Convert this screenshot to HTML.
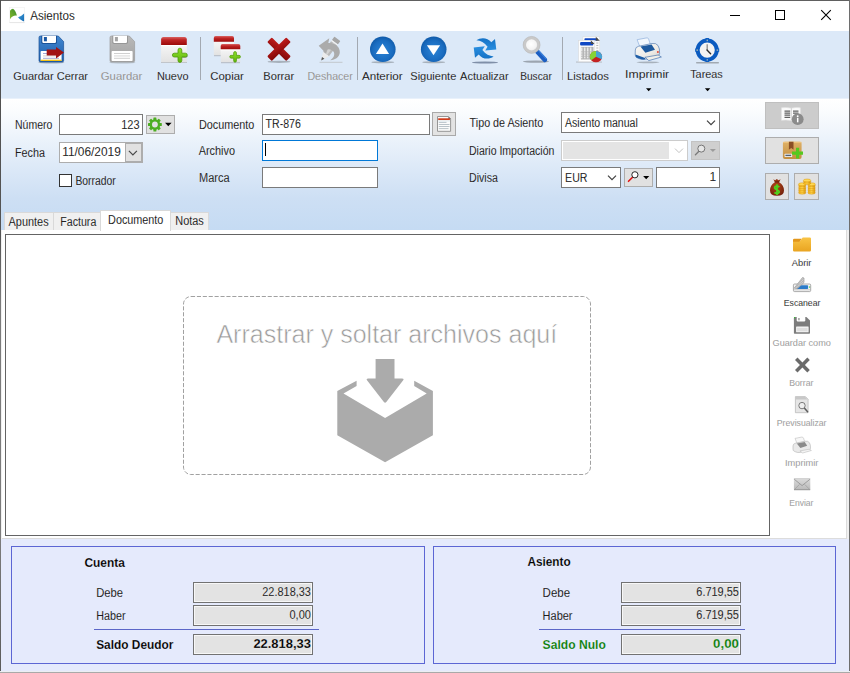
<!DOCTYPE html>
<html lang="es">
<head>
<meta charset="utf-8">
<title>Asientos</title>
<style>
*{box-sizing:border-box;margin:0;padding:0}
html,body{width:850px;height:673px;overflow:hidden;background:#fff}
body{position:relative;font-family:"Liberation Sans",sans-serif;font-size:11px;color:#000}
.abs{position:absolute}
#win{position:absolute;left:0;top:0;width:850px;height:673px;background:#fff;overflow:hidden}
/* window frame */
#bt{left:0;top:0;width:850px;height:1px;background:#606060}
#bl{left:0;top:0;width:1px;height:673px;background:linear-gradient(#4e4e4e 0,#555 35%,#7c7c7c 45%,#7c7c7c 80%,#5a5a5a 100%)}
#br{left:849px;top:0;width:1px;height:673px;background:#6e6e6e}
#bb{left:0;top:671px;width:850px;height:2px;background:#a9a9a9;border-top:1px solid #eceef2}
/* title */
#title{left:30px;top:8px;font-size:12px;line-height:15px;letter-spacing:-0.1px;white-space:nowrap}
/* toolbar */
#tb{left:1px;top:31px;width:848px;height:68px;background:#dce9f8;border-bottom:1px solid #e9f1fb}
.tl{position:absolute;top:69px;height:14px;line-height:14px;font-size:12px;white-space:nowrap;text-align:center}
.tl.dis{color:#8d8d8d}
.sep{position:absolute;top:37px;width:1px;height:43px;background:#a3a9b1}
/* form panel */
#fp{left:1px;top:99px;width:848px;height:131px;background:linear-gradient(#ffffff 0%,#fafcfe 10%,#deeaf8 50%,#cddff4 76%,#c5dbf3 100%)}
.lb{position:absolute;height:13px;line-height:13px;font-size:11px;white-space:nowrap}
.in{position:absolute;background:#fff;border:1px solid #7a7a7a;height:21px;font-size:11px;line-height:17px;padding:1px 3px;white-space:nowrap;overflow:hidden}
.btn{position:absolute;background:#e1e1e1;border:1px solid #adadad}
/* tabs */
.tab{position:absolute;top:212px;height:18px;background:#f0f0f0;border:1px solid #d9d9d9;border-bottom:none;font-size:11px;line-height:17px;text-align:center;white-space:nowrap}
.tab.act{top:210px;height:21px;background:#fff;line-height:17px;border-color:#d9d9d9}
#tp{left:1px;top:230px;width:848px;height:309px;background:#f0f0f0}
#tpw{left:2px;top:230px;width:845px;height:309px;background:#fff;border-right:1px solid #dcdcdc;border-bottom:1px solid #dcdcdc}
#doc{left:5px;top:234px;width:765px;height:302px;background:#fff;border:1px solid #646464}
#drop{left:183px;top:296px;width:408px;height:179px;border:1px dashed #9a9a9a;border-radius:9px}
#dropt{left:183px;top:318px;width:408px;text-align:center;font-size:24px;line-height:32px;color:#a3a3a3;white-space:nowrap}
.sl{position:absolute;left:770px;width:63px;text-align:center;font-size:9.5px;line-height:12px;white-space:nowrap;color:#000}
.sl.dis{color:#8e8e8e}
/* bottom */
#bp{left:1px;top:539px;width:848px;height:132px;background:#e5eafc}
.grp{position:absolute;border:1px solid #5c66d4;background:#e5eafc}
.ro{position:absolute;height:21px;background:#e3e3e3;border:1px solid #727272;box-shadow:inset 0 0 0 1px #f7f7f7;font-size:11px;line-height:17px;text-align:right;padding:1px 2px 0 0;white-space:nowrap}
.hl{position:absolute;height:1px;background:#5b66c8}
.b{font-weight:bold}
</style>
</head>
<body>
<div id="win">

<!-- title bar -->
<svg class="abs" style="left:0;top:0" width="850" height="31" viewBox="0 0 850 31">
  <!-- app icon -->
  <defs><linearGradient id="gLg" x1="0" y1="1" x2="1" y2="0"><stop offset="0" stop-color="#86bb2c"/><stop offset="1" stop-color="#3a8c2c"/></linearGradient>
  <linearGradient id="gLb" x1="0" y1="0" x2="1" y2="1"><stop offset="0" stop-color="#3a9ad8"/><stop offset="1" stop-color="#1a6db4"/></linearGradient></defs>
  <rect x="9.500" y="7.500" width="15" height="15" fill="#fff" stroke="#f1f1f1" stroke-width=".6"/>
  <path d="M9.600,22.600H24.600" stroke="#dedede" stroke-width=".7"/>
  <path d="M10,19.200 L10,10.800 Q11.400,8.800 13,8.800 Q15.600,10.600 16.900,15.600 Q12.600,14.900 10,19.200Z" fill="url(#gLg)"/>
  <path d="M24.100,13.500 L24.100,21 Q23.600,21.400 22.800,21 Q19.400,19.500 18,17.300 Q21.500,16.200 24.100,13.500Z" fill="url(#gLb)"/>
  <!-- controls -->
  <path d="M730,15.500H740" stroke="#000" stroke-width="1" fill="none"/>
  <rect x="775.5" y="10.5" width="9" height="9" fill="none" stroke="#000" stroke-width="1"/>
  <path d="M821.200,10.200L830.800,19.800M830.800,10.200L821.200,19.800" stroke="#000" stroke-width="1.1" fill="none"/>
</svg>

<!-- toolbar -->
<div class="abs" id="tb"></div>
<div class="sep" style="left:200px"></div>
<div class="sep" style="left:357px"></div>
<div class="sep" style="left:562px"></div>
<!--TOOLBAR-ICONS-->
<svg class="abs" id="tbi" style="left:0;top:31px" width="850" height="67" viewBox="0 31 850 67">
<defs>
  <linearGradient id="gBlue" x1="0" y1="0" x2="0" y2="1"><stop offset="0" stop-color="#4187d1"/><stop offset="1" stop-color="#1d5ca9"/></linearGradient>
  <linearGradient id="gGray" x1="0" y1="0" x2="0" y2="1"><stop offset="0" stop-color="#b9b9b9"/><stop offset="1" stop-color="#a2a2a2"/></linearGradient>
  <linearGradient id="gRed" x1="0" y1="0" x2="0" y2="1"><stop offset="0" stop-color="#d86262"/><stop offset=".35" stop-color="#c02626"/><stop offset="1" stop-color="#9c0a0a"/></linearGradient>
  <linearGradient id="gCal" x1="0" y1="0" x2="0" y2="1"><stop offset="0" stop-color="#f6f6f6"/><stop offset="1" stop-color="#e2e2e2"/></linearGradient>
  <linearGradient id="gX" x1="0" y1="38" x2="0" y2="60" gradientUnits="userSpaceOnUse"><stop offset="0" stop-color="#bb1c1c"/><stop offset="1" stop-color="#8a0b0b"/></linearGradient>
  <linearGradient id="gPlus" x1="0" y1="0" x2="0" y2="1"><stop offset="0" stop-color="#8fe02a"/><stop offset="1" stop-color="#5fb40c"/></linearGradient>
  <radialGradient id="gBall" cx=".5" cy=".55" r=".55"><stop offset="0" stop-color="#2b84d6"/><stop offset=".7" stop-color="#1a6cc0"/><stop offset="1" stop-color="#0f5aa8"/></radialGradient>
  <linearGradient id="gArr" x1="0" y1="0" x2="0" y2="1"><stop offset="0" stop-color="#1572c6"/><stop offset="1" stop-color="#2a8fe0"/></linearGradient>
  <radialGradient id="gLens" cx=".45" cy=".45" r=".6"><stop offset="0" stop-color="#ffffff"/><stop offset=".6" stop-color="#f4f4f4"/><stop offset="1" stop-color="#dcdcdc"/></radialGradient>
  <linearGradient id="gXa" x1="0" y1="0" x2="1" y2="0" gradientTransform="rotate(45 .5 .5)"><stop offset="0" stop-color="#b81a1a"/><stop offset="1" stop-color="#870a0a"/></linearGradient>
  <linearGradient id="gXb" x1="1" y1="0" x2="0" y2="0" gradientTransform="rotate(-45 .5 .5)"><stop offset="0" stop-color="#b81a1a"/><stop offset="1" stop-color="#870a0a"/></linearGradient>
  <linearGradient id="gPrn" x1="0" y1="0" x2="1" y2="1"><stop offset="0" stop-color="#fbfaf8"/><stop offset=".6" stop-color="#eeece7"/><stop offset="1" stop-color="#d3d0c9"/></linearGradient>
</defs>

<!-- Guardar Cerrar -->
<g id="i-save">
  <ellipse cx="51.300" cy="62.500" rx="13" ry="1" fill="#98a0aa" opacity=".75"/>
  <path d="M40.500,36 H58.300 L63.600,41.600 V60.600 Q63.600,62 62.200,62 H40.400 Q39,62 39,60.600 V37.400 Q39,36 40.500,36Z" fill="url(#gBlue)" stroke="#1b5296" stroke-width=".7"/>
  <path d="M41.300,35.700 V42.200 Q41.300,43.900 43,43.900 H55.300 Q57,43.900 57,42.200 V35.700Z" fill="#1b5297"/><path d="M42.300,35.700 V41.700 Q42.300,42.900 43.500,42.900 H54.800 Q56,42.900 56,41.700 V35.700Z" fill="#fff"/>
  <rect x="43.900" y="37" width="3" height="4.300" fill="#1a58a4"/>
  <rect x="40.600" y="50.900" width="21" height="10.100" rx=".8" fill="#fff"/>
  <rect x="40.600" y="59.700" width="21" height="1.300" fill="#f2c21a"/>
  <path d="M43,53.500H59M43,58.300H59" stroke="#8d93c9" stroke-width=".8"/><path d="M43,55.900H59" stroke="#cfcfcf" stroke-width="1"/>
  <path d="M46.700,49.400 H56 V46.900 L64,52.600 L56,58.500 V55.600 H46.700Z" fill="#a11313"/>
</g>
<!-- Guardar (disabled) -->
<g id="i-save2">
  <ellipse cx="122.300" cy="62.500" rx="13" ry="1" fill="#aab2bc" opacity=".7"/>
  <path d="M111.500,36 H129.300 L134.600,41.600 V60.600 Q134.600,62 133.200,62 H111.400 Q110,62 110,60.600 V37.400 Q110,36 111.500,36Z" fill="url(#gGray)" stroke="#9c9c9c" stroke-width=".7"/>
  <path d="M112.300,35.700 V42.200 Q112.300,43.900 114,43.900 H126.300 Q128,43.900 128,42.200 V35.700Z" fill="#979797"/><path d="M113.300,35.700 V41.700 Q113.300,42.900 114.500,42.900 H125.800 Q127,42.900 127,41.700 V35.700Z" fill="#fff"/>
  <rect x="114.900" y="37" width="3" height="4.300" fill="#a4a4a4"/>
  <rect x="111.600" y="50.900" width="21" height="10.100" rx=".8" fill="#fff"/>
  <path d="M114,53.500H130M114,58.300H130" stroke="#c4c4c4" stroke-width=".8"/><path d="M114,55.900H130" stroke="#e2e2e2" stroke-width="1.400"/>
</g>
<!-- Nuevo -->
<g id="i-new">
  <rect x="161" y="62" width="26" height="1" fill="#b3b9c1"/>
  <rect x="161.100" y="44.500" width="25.700" height="17.800" fill="url(#gCal)"/>
  <rect x="161.100" y="44.900" width="25.700" height="1.400" fill="#fff"/>
  <path d="M163.500,37 H184.500 Q186.800,37 186.800,39.600 V44.900 H161.100 V39.600 Q161.100,37 163.500,37Z" fill="url(#gRed)"/>
  <path d="M179.900,48.200 q1.900,0 1.900,1.900 v3.100 h3.600 q1.900,0 1.900,1.900 q0,1.900 -1.900,1.900 h-3.600 v3.500 q0,1.900 -1.900,1.900 q-1.900,0 -1.900,-1.900 v-3.500 h-3.700 q-1.900,0 -1.900,-1.900 q0,-1.900 1.900,-1.900 h3.700 v-3.100 q0,-1.900 1.900,-1.900Z" fill="url(#gPlus)" stroke="#4d9a08" stroke-width=".8"/><path d="M182.300,57.400h3.300q1.800,0 2,-1.600" fill="none" stroke="#3d5a2a" stroke-width=".6" opacity=".6"/>
</g>
<!-- Copiar -->
<g id="i-copy">
  <rect x="213.800" y="41.500" width="20.200" height="13.700" fill="url(#gCal)"/>
  <rect x="214" y="55.200" width="7" height="1" fill="#b3b9c1"/>
  <path d="M215.600,36.100 H232.200 Q234,36.100 234,38 V41.800 H213.800 V38 Q213.800,36.100 215.600,36.100Z" fill="url(#gRed)"/>
  <rect x="220.700" y="49" width="19.600" height="13.300" fill="url(#gCal)"/>
  <rect x="220.700" y="49.200" width="19.600" height="1.200" fill="#fff"/>
  <rect x="221" y="62.200" width="19" height="1" fill="#b3b9c1"/>
  <path d="M222.500,44.100 H238.500 Q240.300,44.100 240.300,46 V49.200 H220.700 V46 Q220.700,44.100 222.500,44.100Z" fill="url(#gRed)"/>
  <path d="M235.050,51.600 q1.400,0 1.400,1.400 v2.350 h2.600 q1.400,0 1.400,1.400 q0,1.400 -1.400,1.400 h-2.600 v2.700 q0,1.400 -1.400,1.400 q-1.400,0 -1.400,-1.400 v-2.700 h-2.500 q-1.400,0 -1.400,-1.400 q0,-1.400 1.400,-1.400 h2.500 v-2.350 q0,-1.400 1.400,-1.400Z" fill="url(#gPlus)" stroke="#4d9a08" stroke-width=".7"/>
</g>
<!-- Borrar -->
<g id="i-del">
  <ellipse cx="279" cy="61.800" rx="11.500" ry="1.100" fill="#9aa2ab" opacity=".8"/>
  <g transform="translate(279 49.200)" fill="url(#gX)">
    <rect x="-13.500" y="-3.300" width="27" height="6.600" rx="1.200" transform="rotate(45)" fill="url(#gXa)"/>
    <rect x="-13.500" y="-3.300" width="27" height="6.600" rx="1.200" transform="rotate(-45)" fill="url(#gXb)"/>
  </g>
</g>
<!-- Deshacer (disabled) -->
<g id="i-undo">
  <rect x="319.500" y="61.800" width="23" height="1" fill="#c3c7cc"/>
  <g transform="translate(329.300 49.700) rotate(36.700)">
    <rect x="-3.700" y="-13.600" width="7.400" height="4.300" rx=".6" fill="#a6a6a6"/>
    <rect x="-3.700" y="-9.300" width="7.400" height="1.400" fill="#f0f0f0"/>
    <rect x="-3.700" y="-7.900" width="7.400" height="13.400" fill="#b9b9b9"/>
    <rect x="-1.200" y="-7.900" width="2.600" height="13.400" fill="#d2d2d2"/>
    <path d="M-3.700,5.500 H3.700 L0,13.400Z" fill="#ebebeb"/>
    <path d="M-1.500,10.200 H1.500 L0,13.600Z" fill="#565656"/>
  </g>
  <path d="M318.700,45.700 L329.300,38.300 L328.300,43 C335.500,42.600 340.200,47.300 339.800,52.600 C339.500,56.800 335.500,60.200 330.200,60.200 C333.800,58 335.200,54.600 333.600,51.800 C332.300,49.600 329.600,48.800 327,49.400 L326.200,53.700Z" fill="#ababab"/>
</g>
<!-- Anterior -->
<g id="i-prev">
  <ellipse cx="382.800" cy="62.300" rx="11.500" ry="1" fill="#9aa2ab" opacity=".8"/>
  <circle cx="382.800" cy="49.200" r="12.800" fill="url(#gBall)"/>
  <path d="M382.500,43.600 L389.100,54 H375.900Z" fill="#fff"/>
</g>
<!-- Siguiente -->
<g id="i-next">
  <ellipse cx="433.700" cy="62.300" rx="11.500" ry="1" fill="#9aa2ab" opacity=".8"/>
  <circle cx="433.700" cy="49.200" r="12.800" fill="url(#gBall)"/>
  <path d="M426.900,45.200 H440.100 L433.500,55.300Z" fill="#fff"/>
</g>
<!-- Actualizar -->
<g id="i-refresh">
  <ellipse cx="485" cy="62.500" rx="13" ry="1" fill="#6e7f9a" opacity=".85"/>
  <path id="arr1" d="M476.400,40.300 C480.500,37.200 487.500,37.200 491.300,42.300 L495,39 L496.300,49.400 L485.200,50.500 L487.600,46.700 C484.500,42.600 480.500,40.600 476.400,40.300Z" fill="url(#gArr)"/>
  <path d="M476.400,40.300 C480.500,37.200 487.500,37.200 491.300,42.300 L495,39 L496.300,49.400 L485.200,50.500 L487.600,46.700 C484.500,42.600 480.500,40.600 476.400,40.300Z" fill="url(#gArr)" transform="rotate(180 485 48.400)"/>
</g>
<!-- Buscar -->
<g id="i-find">
  <ellipse cx="536" cy="61.600" rx="13" ry="1.100" fill="#8c949e" opacity=".8"/>
  <path d="M537.300,51.800 L544.900,59.900" stroke="#1b5ec2" stroke-width="4.600" stroke-linecap="round"/>
  <path d="M538.600,50.700 L546,58.600" stroke="#3d82dc" stroke-width="1.200" stroke-linecap="round"/>
  <circle cx="531.600" cy="44.900" r="7.100" fill="url(#gLens)" stroke="#c9c9c9" stroke-width="3"/>
  <circle cx="531.600" cy="44.900" r="8.500" fill="none" stroke="#b5b5b5" stroke-width=".5"/>
</g>
<!-- Listados -->
<g id="i-list">
  <rect x="576" y="61.500" width="26" height="1.100" fill="#b9bfc6"/>
  <rect x="582.900" y="36.800" width="16.900" height="24.500" fill="#fbfbfb" stroke="#dadada" stroke-width=".5"/>
  <rect x="584.400" y="38.300" width="13.400" height="2.100" rx="1" fill="#1048c4"/>
  <path d="M595.800,36.800 L599.800,40.800 H595.800Z" fill="#4a4a4a"/>
  <path d="M596.300,43H598.300M596.300,45.500H598.300M596.300,48H598.300M596.300,50.500H598.300" stroke="#bdbdbd" stroke-width="1"/>
  <rect x="578.600" y="40.300" width="15.900" height="21.400" fill="#fdfdfd" stroke="#d6d6d6" stroke-width=".5"/>
  <rect x="580.100" y="42.100" width="13.200" height="3.300" rx="1" fill="#1048c4"/>
  <path d="M590.800,40.300 L594.500,44 H590.800Z" fill="#4a4a4a"/>
  <rect x="580.900" y="46.900" width="12.600" height="12.600" fill="#b4b4b4"/>
  <path d="M581.700,47.500v11.500M584.700,47.500v11.500M587.700,47.500v11.500M590.700,47.500v11.500" stroke="#e9e9e9" stroke-width="1.500"/>
  <path d="M581,51.800h12.400M581,54.100h12.400M581,56.300h12.400M581,58.500h12.400" stroke="#b4b4b4" stroke-width=".7"/>
  <g>
    <ellipse cx="596" cy="56.700" rx="6.100" ry="5.600" fill="#c32222"/>
    <path d="M596,56.700 L596,51.100 A6.100,5.600 0 0 0 591.300,60.300Z" fill="#86d436"/>
    <path d="M596,56.700 L596,51.100 A6.100,5.600 0 0 1 601.500,59.200Z" fill="#45a3d4"/>
  </g>
</g>
<!-- Imprimir -->
<g id="i-print">
  <ellipse cx="648" cy="62.300" rx="11.500" ry=".9" fill="#9aa2ab" opacity=".8"/>
  <path d="M637.100,39.700 L646,38 Q648,37.300 648.600,39 L650.300,44.300 L639.800,46.600Z" fill="#f2f7fd" stroke="#8fb0dc" stroke-width=".7"/>
  <path d="M635.300,50 Q635.300,47 638.500,46.300 L652,43.500 Q656,42.800 658,45.500 Q660,48.500 659.600,53.500 Q659.400,55.800 657,56.500 L645,59.300 Q642,59.800 639,58.600 L636.400,57.400 Q635.200,56.600 635.200,54.500Z" fill="url(#gPrn)" stroke="#3a6aa8" stroke-width=".6"/>
  <path d="M640.400,46.500 L651.600,44.400 L655,49.800 L645.400,52.700Z" fill="#1e5a9f"/>
  <path d="M635.500,54.500 L645,58 L645,59.300 Q642,59.800 639,58.600 L636.400,57.400 Q635.400,56.600 635.500,54.500Z" fill="#1e5ea8"/>
  <path d="M644.900,57.300 L658.200,55 L661.400,57 L648.800,60.600Z" fill="#f0eee8" stroke="#2d62a6" stroke-width=".6"/>
  <circle cx="657.900" cy="51.900" r="1" fill="#e24a3a"/>
</g>
<!-- Tareas -->
<g id="i-task">
  <rect x="696" y="62" width="23" height="1.400" rx=".7" fill="#a1a9b1"/>
  <circle cx="707.200" cy="50.100" r="9.600" fill="#f3f3f3" stroke="#0b5bc0" stroke-width="4"/>
  <path d="M707.200,38.100v2.600M707.200,59.500v2.600M695.200,50.100h2.600M716.600,50.100h2.600" stroke="#0b5bc0" stroke-width="3.400"/>
  <path d="M707.200,39.600v1.600M707.200,59.200v1.400M696.400,50.100h1.600M716.600,50.100h1.600" stroke="#f1e7b4" stroke-width=".9"/>
  <path d="M707.200,44.200V50.300" stroke="#8b8b8b" stroke-width="1.300"/>
  <path d="M707,50.100L710.600,53.700" stroke="#2d2d2d" stroke-width="1.400" stroke-linecap="round"/>
</g>
<!-- dropdown arrows -->
<path d="M646,88.200h5.400l-2.700,3Z" fill="#000"/>
<path d="M704.900,88.200h5.400l-2.700,3Z" fill="#000"/>
</svg>
<!--/TOOLBAR-ICONS-->

<!-- form panel -->
<div class="abs" id="fp"></div>
<div class="in" style="left:59px;top:114px;width:84px;text-align:right"></div>
<div class="btn" style="left:146px;top:115px;width:29px;height:19px"></div>
<div class="in" style="left:59px;top:142px;width:84px;border-color:#adadad"></div>
<div class="btn" style="left:125px;top:143px;width:17px;height:19px;background:#e1e1e1;border-color:#adadad"></div>
<div class="abs" style="left:59px;top:174px;width:13px;height:13px;background:#fff;border:1px solid #333"></div>

<div class="in" style="left:262px;top:114px;width:168px"></div>
<div class="btn" style="left:432px;top:112px;width:24px;height:24px;background:#e3e3e3;border-color:#a9a9a9"></div>
<div class="in" style="left:262px;top:140px;width:116px;border-color:#0078d7"></div>
<div class="abs" style="left:265px;top:143px;width:1px;height:13px;background:#000"></div>
<div class="in" style="left:262px;top:167px;width:116px"></div>

<div class="in" style="left:561px;top:112px;width:159px"></div>
<div class="in" style="left:561px;top:140px;width:127px;border-color:#cccccc;background:#fff"></div>
<div class="abs" style="left:563px;top:142px;width:106px;height:17px;background:#e4e4e4"></div>
<div class="btn" style="left:691px;top:141px;width:29px;height:19px;background:#cfcfcf;border-color:#c3c3c3"></div>
<div class="in" style="left:561px;top:167px;width:60px"></div>
<div class="btn" style="left:624px;top:168px;width:29px;height:19px"></div>
<div class="in" style="left:656px;top:167px;width:64px;text-align:right"></div>

<div class="btn" style="left:765px;top:102px;width:54px;height:27px;background:#cccccc;border-color:#bfbfbf"></div>
<div class="btn" style="left:765px;top:137px;width:54px;height:27px"></div>
<div class="btn" style="left:765px;top:173px;width:24px;height:27px"></div>
<div class="btn" style="left:794px;top:173px;width:25px;height:27px"></div>

<!-- tabs -->
<div class="abs" id="tp"></div><div class="abs" id="tpw"></div>
<div class="tab" style="left:4px;width:50px"></div>
<div class="tab" style="left:53px;width:48px"></div>
<div class="tab" style="left:170px;width:39px"></div>
<div class="tab act" style="left:100px;width:71px"></div>
<div class="abs" id="doc"></div>
<svg class="abs" style="left:180px;top:292px" width="416" height="188" viewBox="180 292 416 188">
  <rect x="183.500" y="296.500" width="407" height="178" rx="7.500" fill="none" stroke="#969696" stroke-width=".9" stroke-dasharray="4.100 1.800"/>
  <path d="M337.300,391 L356.600,380.700 L356.600,386 L343.500,393.500 L385.100,418 L426.700,393.500 L414.200,386 L414.200,380.700 L432.900,391 L432.900,435.200 L385.100,462.300 L337.300,435.200 Z" fill="#ababab"/>
  <path d="M375.600,358.900 H394.500 V378.500 H402 Q404.500,378.500 403,380.500 L386.300,402 Q385.100,403.500 383.900,402 L367.200,380.500 Q365.700,378.500 368.200,378.500 H375.600 Z" fill="#ababab"/>
</svg>


<!--FORM-ICONS-->
<svg class="abs" id="fmi" style="left:0;top:98px" width="850" height="440" viewBox="0 98 850 440">
<defs>
  <linearGradient id="gFold" x1="0" y1="0" x2="0" y2="1"><stop offset="0" stop-color="#f9c445"/><stop offset="1" stop-color="#e9a421"/></linearGradient>
  <linearGradient id="gBox" x1="0" y1="0" x2="0" y2="1"><stop offset="0" stop-color="#dfb167"/><stop offset="1" stop-color="#c48f40"/></linearGradient>
  <radialGradient id="gBag" cx=".45" cy=".4" r=".65"><stop offset="0" stop-color="#b4481a"/><stop offset="1" stop-color="#74200a"/></radialGradient>
  <linearGradient id="gCoin" x1="0" y1="0" x2="1" y2="0"><stop offset="0" stop-color="#f6b51a"/><stop offset=".5" stop-color="#ffd34a"/><stop offset="1" stop-color="#e09a08"/></linearGradient>
  <linearGradient id="gEnv" x1="0" y1="0" x2="0" y2="1"><stop offset="0" stop-color="#dcdcdc"/><stop offset="1" stop-color="#b9b9b9"/></linearGradient>
</defs>
<!-- gear button -->
<g id="f-gear">
  <g transform="translate(154.900 124.500)" fill="#4cae22">
    <g id="teeth"><rect x="-1.500" y="-6.900" width="3" height="13.800" rx=".5"/><rect x="-6.900" y="-1.500" width="13.800" height="3" rx=".5"/></g>
    <g transform="rotate(45)"><rect x="-1.500" y="-6.900" width="3" height="13.800" rx=".5"/><rect x="-6.900" y="-1.500" width="13.800" height="3" rx=".5"/></g>
    <circle r="5.300"/>
    <circle r="2.900" fill="#e1e1e1"/>
  </g>
  <path d="M165,122.700h6.600l-3.300,3.600Z" fill="#000"/>
</g>
<!-- date chevron -->
<path d="M128.900,150.800L132.900,154.800L136.900,150.800" fill="none" stroke="#484848" stroke-width="1.200"/>
<!-- notepad -->
<g id="f-note">
  <path d="M437.500,116.500H448.300L450.600,118.800V131.300H437.500Z" fill="#fbfbfb" stroke="#8b8b8b" stroke-width=".9"/>
  <path d="M448.300,116.200L451,118.900H448.300Z" fill="#777"/>
  <rect x="438.200" y="118.300" width="11.700" height="1.800" fill="#cf3b1b"/>
  <rect x="438.200" y="120.400" width="11.700" height="1.200" fill="#e4f1f6"/>
  <path d="M438.800,122.400H446.500M438.800,124.500H449.500M438.800,126.500H449.500M438.800,128.600H448.500" stroke="#a9b5bd" stroke-width=".8"/>
</g>
<!-- combo chevrons -->
<path d="M707,120.700L711,124.700L715,120.700" fill="none" stroke="#404040" stroke-width="1.200"/>
<path d="M675,148.600L679,152.600L683,148.600" fill="none" stroke="#c2c2c2" stroke-width="1"/>
<path d="M608,175.700L612,179.700L616,175.700" fill="none" stroke="#404040" stroke-width="1.200"/>
<!-- disabled search -->
<g id="f-s1">
  <path d="M698.900,151.300L695.400,154.800" stroke="#7a7a7a" stroke-width="1.300" stroke-linecap="round"/>
  <circle cx="701.300" cy="148.600" r="3.500" fill="#e6e6e6" stroke="#6a6a6a" stroke-width=".9"/>
  <path d="M709.900,149.100h6l-3,3Z" fill="#9c9c9c"/>
</g>
<!-- search -->
<g id="f-s2">
  <path d="M632.300,177.500L628.500,181.300" stroke="#e21212" stroke-width="1.600" stroke-linecap="round"/>
  <circle cx="634.900" cy="174.800" r="3.100" fill="#fff" stroke="#111" stroke-width=".9"/>
  <path d="M643.100,176.100h6.200l-3.100,3.100Z" fill="#000"/>
</g>
<!-- book info -->
<g id="f-book">
  <path d="M781.500,107.800Q786,107 791.400,108.200Q796,107 800.300,107.800V120.300Q796,119.500 791.400,120.600Q786,119.500 781.500,120.300Z" fill="#fbfbfb" stroke="#e3e3e3" stroke-width=".7"/>
  <path d="M791.400,108.200V120.600" stroke="#c4c4c4" stroke-width=".7"/>
  <path d="M784.500,111H790.200M784.500,113.100H790.200M784.500,115.200H790.200M784.500,117.400H790.200M793,111H798.500M793,113.100H798.500" stroke="#606060" stroke-width="1.250"/>
  <circle cx="797.700" cy="119.200" r="5.900" fill="#8b8b8b"/>
  <circle cx="797.700" cy="116.200" r=".95" fill="#fff"/><rect x="796.950" y="117.900" width="1.500" height="4.400" fill="#fff"/>
</g>
<!-- box plus -->
<g id="f-box">
  <rect x="782.900" y="141.700" width="18.700" height="17.200" rx="2" fill="url(#gBox)"/>
  <rect x="782.900" y="141.700" width="18.700" height="1.200" rx=".6" fill="#edc27c"/>
  <path d="M788.900,141.700H793.500V149.700L791.200,148L788.900,149.700Z" fill="#8a4e25"/>
  <rect x="784.600" y="153.800" width="7.600" height="3.200" rx=".5" fill="#f1f1f1"/>
  <rect x="785.400" y="154.700" width="5.800" height="1.400" fill="#55606c"/>
  <path d="M796,147.700h3.200v3.900h3.800v3.200h-3.800v3.700h-3.200v-3.700h-4v-3.200h4Z" fill="#56c81f"/>
</g>
<!-- money bag -->
<g id="f-bag">
  <path d="M773.300,179.300L775.200,180.300L776.800,178.900L778.500,180.300L780.600,179.300L779,182.200Q784,185 784,190.500Q784,195.800 777,195.800Q770,195.800 770,190.500Q770,185 775,182.200Z" fill="url(#gBag)"/>
  <path d="M774.600,181.900H779.300" stroke="#5e1a08" stroke-width=".9"/>
  <path d="M779.400,186.900Q777,185.400 775.300,186.500Q773.800,188 776,189.300L778.200,190.400Q780,191.800 778.500,193Q776.700,194 774.400,192.600M777,184.300V195" fill="none" stroke="#4fd21c" stroke-width="1.800"/>
</g>
<!-- coins -->
<g id="f-coins" stroke="#d08c00" stroke-width=".4">
  <g id="st1"><ellipse cx="802.200" cy="192.800" rx="3.700" ry="1.400" fill="url(#gCoin)"/><ellipse cx="802.200" cy="190.900" rx="3.700" ry="1.400" fill="url(#gCoin)"/><ellipse cx="802.200" cy="189" rx="3.700" ry="1.400" fill="url(#gCoin)"/><ellipse cx="802.200" cy="187.100" rx="3.700" ry="1.400" fill="url(#gCoin)"/><ellipse cx="802.200" cy="185.200" rx="3.700" ry="1.400" fill="url(#gCoin)"/><ellipse cx="802.200" cy="184.200" rx="3.700" ry="1.400" fill="#ffd954"/></g>
  <g><ellipse cx="811.600" cy="192.800" rx="3.700" ry="1.400" fill="url(#gCoin)"/><ellipse cx="811.600" cy="190.900" rx="3.700" ry="1.400" fill="url(#gCoin)"/><ellipse cx="811.600" cy="189" rx="3.700" ry="1.400" fill="url(#gCoin)"/><ellipse cx="811.600" cy="187.100" rx="3.700" ry="1.400" fill="url(#gCoin)"/><ellipse cx="811.600" cy="185.200" rx="3.700" ry="1.400" fill="url(#gCoin)"/><ellipse cx="811.600" cy="184.200" rx="3.700" ry="1.400" fill="#ffd954"/></g>
  <g><ellipse cx="807.100" cy="183.200" rx="3.700" ry="1.400" fill="url(#gCoin)"/><ellipse cx="807.100" cy="181.600" rx="3.700" ry="1.400" fill="url(#gCoin)"/><ellipse cx="807.100" cy="180.400" rx="3.700" ry="1.400" fill="#ffd954"/></g>
</g>

<!-- side panel icons -->
<g id="s-open">
  <path d="M793,240Q793,238.800 794.200,238.800H801.800L799.600,242H793Z" fill="#e2961b"/>
  <path d="M793,241.700H799.600L802.700,237.400H809.800Q811,237.400 811,238.600V250.300Q811,251.500 809.800,251.500H794.200Q793,251.500 793,250.300Z" fill="url(#gFold)"/>
</g>
<g id="s-scan">
  <rect x="793.400" y="284" width="17.300" height="7.600" rx="1.200" fill="#f3f3f3" stroke="#8a8a8a" stroke-width=".7"/>
  <path d="M793.600,289.800H810.500" stroke="#a8a8a8" stroke-width=".6"/>
  <path d="M798.600,285.300H807.400Q808.100,285.300 808.100,286V288.300Q808.100,289 807.400,289H796.600Z" fill="#2b7bc9"/>
  <path d="M794.200,288.200L802.500,277.500L804,278V282.400L797.600,288.600Z" fill="#d4d4d4" stroke="#8c8c8c" stroke-width=".6" stroke-linejoin="round"/>
  <path d="M795.700,287.800L803.200,278.300M797,288L803.700,280.200" stroke="#9c9c9c" stroke-width=".6"/>
  <rect x="809" y="286.500" width="1.100" height="1.100" fill="#2fd02f"/>
</g>
<g id="s-save">
  <path d="M794.700,317.100H806.400L810,320.600V333Q810,333.800 809.200,333.800H794.700Q793.900,333.800 793.900,333V317.900Q793.900,317.100 794.700,317.100Z" fill="#7c7c7c"/>
  <path d="M796.700,317.100H805.300V320.600Q805.300,321.400 804.500,321.400H797.500Q796.700,321.400 796.700,320.600Z" fill="#fff"/>
  <rect x="798.400" y="318" width="1.100" height="2.300" fill="#7c7c7c"/>
  <rect x="796.100" y="326.600" width="12.500" height="5.700" rx=".5" fill="#f5f5f5"/>
  <rect x="797.100" y="327.800" width="10.500" height="3.500" fill="#dedede"/>
  <rect x="794" y="317.200" width="1" height="1" fill="#22d022"/>
</g>
<g id="s-del" transform="translate(802.400 365)" fill="#6b6b6b">
  <rect x="-8.700" y="-1.750" width="17.400" height="3.500" transform="rotate(45)"/>
  <rect x="-8.700" y="-1.750" width="17.400" height="3.500" transform="rotate(-45)"/>
</g>
<g id="s-prev">
  <path d="M795.400,396.600H805.400L808.100,399.300V412.700H795.400Z" fill="#e6e6e6" stroke="#b4b4b4" stroke-width=".7"/>
  <path d="M795.800,397H805.300L807.600,399.400H795.800Z" fill="#c8c8c8"/>
  <path d="M804.300,408L807.600,411.800" stroke="#5c5c5c" stroke-width="1.500" stroke-linecap="round"/>
  <circle cx="802" cy="405.600" r="3.200" fill="#efefef" stroke="#6e6e6e" stroke-width=".9"/>
</g>
<g id="s-print">
  <path d="M795,438.400L801.600,437.100Q803,436.900 803.500,438.100L804.700,441.700L797,443.400Z" fill="#f7f7f7" stroke="#bdbdbd" stroke-width=".6"/>
  <path d="M793,446Q793,443.800 795.200,443.300L805,441.200Q808,440.700 809.400,442.700Q810.800,444.900 810.500,448.400Q810.300,450 808.600,450.500L800,452.400Q797.800,452.800 795.700,451.900L793.800,451Q793,450.500 793,449Z" fill="#eaeaea" stroke="#b3b3b3" stroke-width=".6"/>
  <path d="M796.800,443.500L804.700,441.900L807.200,445.800L800.400,447.900Z" fill="#8a8a8a"/>
  <path d="M799.900,450.900L809.400,449.200L811.400,450.500L802.700,453Z" fill="#f4f4f4" stroke="#b3b3b3" stroke-width=".5"/>
</g>
<g id="s-mail">
  <rect x="793.900" y="478.200" width="16.400" height="11.800" rx="1" fill="url(#gEnv)"/>
  <rect x="793.900" y="478.200" width="16.400" height=".9" fill="#cfcfcf"/>
  <path d="M794.300,479.300L802.100,485.600L809.900,479.300" fill="none" stroke="#8f8f8f" stroke-width=".8"/>
  <path d="M794.400,489.600L799.600,484.300M809.800,489.600L804.600,484.300" stroke="#9c9c9c" stroke-width=".7"/>
  <rect x="794" y="489.400" width="16.200" height=".8" fill="#8d8d8d"/>
</g>
</svg>
<!--/FORM-ICONS-->

<!-- bottom -->
<div class="abs" id="bp"></div>
<div class="grp" style="left:11px;top:546px;width:414px;height:118px"></div>
<div class="grp" style="left:433px;top:546px;width:403px;height:118px"></div>

<div class="ro" style="left:193px;top:582px;width:120px"></div>
<div class="ro" style="left:193px;top:605px;width:120px"></div>
<div class="hl" style="left:94px;top:629px;width:225px"></div>
<div class="ro b" style="left:193px;top:634px;width:120px;font-size:13px"></div>

<div class="ro" style="left:621px;top:582px;width:120px"></div>
<div class="ro" style="left:621px;top:605px;width:120px"></div>
<div class="hl" style="left:539px;top:629px;width:206px"></div>
<div class="ro b" style="left:621px;top:634px;width:120px;font-size:13px;color:#007a00"></div>

<!--TXT-->
<svg class="abs" id="txt" style="left:0;top:0" width="850" height="673" viewBox="0 0 850 673" font-family="'Liberation Sans', sans-serif" fill="#000" stroke="#ffffff" stroke-opacity=".45" stroke-width=".28">
<text x="30.2" y="20.0" font-size="12" textLength="44.6" lengthAdjust="spacingAndGlyphs">Asientos</text>
<text x="13.2" y="79.6" font-size="11" textLength="74.8" lengthAdjust="spacingAndGlyphs">Guardar Cerrar</text>
<text x="100.8" y="79.6" font-size="11" fill="#828282" textLength="41.5" lengthAdjust="spacingAndGlyphs">Guardar</text>
<text x="156.9" y="79.6" font-size="11" textLength="31.6" lengthAdjust="spacingAndGlyphs">Nuevo</text>
<text x="210.3" y="79.6" font-size="11" textLength="33.5" lengthAdjust="spacingAndGlyphs">Copiar</text>
<text x="263.3" y="79.6" font-size="11" textLength="30.9" lengthAdjust="spacingAndGlyphs">Borrar</text>
<text x="307.4" y="79.6" font-size="11" fill="#828282" textLength="45.4" lengthAdjust="spacingAndGlyphs">Deshacer</text>
<text x="361.9" y="79.6" font-size="11" textLength="40.8" lengthAdjust="spacingAndGlyphs">Anterior</text>
<text x="410.3" y="79.6" font-size="11" textLength="46.0" lengthAdjust="spacingAndGlyphs">Siguiente</text>
<text x="460.1" y="79.6" font-size="11" textLength="48.6" lengthAdjust="spacingAndGlyphs">Actualizar</text>
<text x="520.2" y="79.6" font-size="11" textLength="31.6" lengthAdjust="spacingAndGlyphs">Buscar</text>
<text x="567.0" y="79.6" font-size="11" textLength="41.9" lengthAdjust="spacingAndGlyphs">Listados</text>
<text x="625.1" y="77.6" font-size="11" textLength="44.1" lengthAdjust="spacingAndGlyphs">Imprimir</text>
<text x="690.2" y="77.6" font-size="11" textLength="32.6" lengthAdjust="spacingAndGlyphs">Tareas</text>
<text x="15.0" y="128.8" font-size="12" textLength="37.3" lengthAdjust="spacingAndGlyphs">Número</text>
<text x="121.2" y="128.6" font-size="12" textLength="18.4" lengthAdjust="spacingAndGlyphs">123</text>
<text x="15.0" y="156.8" font-size="12" textLength="30.0" lengthAdjust="spacingAndGlyphs">Fecha</text>
<text x="62.2" y="155.5" font-size="12" textLength="58.6" lengthAdjust="spacingAndGlyphs">11/06/2019</text>
<text x="75.4" y="185.0" font-size="12" textLength="40.2" lengthAdjust="spacingAndGlyphs">Borrador</text>
<text x="199.0" y="129.0" font-size="12" textLength="55.3" lengthAdjust="spacingAndGlyphs">Documento</text>
<text x="265.6" y="128.0" font-size="12" textLength="35.3" lengthAdjust="spacingAndGlyphs">TR-876</text>
<text x="198.7" y="155.0" font-size="12" textLength="36.3" lengthAdjust="spacingAndGlyphs">Archivo</text>
<text x="199.0" y="182.2" font-size="12" textLength="30.6" lengthAdjust="spacingAndGlyphs">Marca</text>
<text x="469.6" y="127.0" font-size="12" textLength="73.7" lengthAdjust="spacingAndGlyphs">Tipo de Asiento</text>
<text x="565.0" y="127.0" font-size="12" textLength="72.8" lengthAdjust="spacingAndGlyphs">Asiento manual</text>
<text x="469.0" y="155.0" font-size="12" textLength="85.4" lengthAdjust="spacingAndGlyphs">Diario Importación</text>
<text x="469.0" y="182.2" font-size="12" textLength="28.9" lengthAdjust="spacingAndGlyphs">Divisa</text>
<text x="565.1" y="181.6" font-size="12" textLength="22.4" lengthAdjust="spacingAndGlyphs">EUR</text>
<text x="709.4" y="181.2" font-size="12">1</text>
<text x="8.6" y="225.5" font-size="12" textLength="40.0" lengthAdjust="spacingAndGlyphs">Apuntes</text>
<text x="60.3" y="225.5" font-size="12" textLength="36.0" lengthAdjust="spacingAndGlyphs">Factura</text>
<text x="108.1" y="223.7" font-size="12" textLength="55.3" lengthAdjust="spacingAndGlyphs">Documento</text>
<text x="175.3" y="225.4" font-size="12" textLength="28.5" lengthAdjust="spacingAndGlyphs">Notas</text>
<text x="216.4" y="342.8" font-size="25" fill="#9b9b9b" textLength="340.8" lengthAdjust="spacingAndGlyphs" stroke-opacity="1" stroke-width=".55">Arrastrar y soltar archivos aquí</text>
<text x="791.8" y="265.8" font-size="9" textLength="19.6" lengthAdjust="spacingAndGlyphs">Abrir</text>
<text x="783.8" y="305.9" font-size="9" textLength="36.6" lengthAdjust="spacingAndGlyphs">Escanear</text>
<text x="772.6" y="345.6" font-size="9" fill="#868686" textLength="58.2" lengthAdjust="spacingAndGlyphs">Guardar como</text>
<text x="789.2" y="385.9" font-size="9" fill="#868686" textLength="24.2" lengthAdjust="spacingAndGlyphs">Borrar</text>
<text x="776.8" y="425.9" font-size="9" fill="#868686" textLength="49.7" lengthAdjust="spacingAndGlyphs">Previsualizar</text>
<text x="785.0" y="465.8" font-size="9" fill="#868686" textLength="33.4" lengthAdjust="spacingAndGlyphs">Imprimir</text>
<text x="789.2" y="506.1" font-size="9" fill="#868686" textLength="24.2" lengthAdjust="spacingAndGlyphs">Enviar</text>
<text x="84.4" y="567.0" font-size="12" font-weight="bold" textLength="40.4" lengthAdjust="spacingAndGlyphs">Cuenta</text>
<text x="96.2" y="597.0" font-size="12" textLength="26.8" lengthAdjust="spacingAndGlyphs">Debe</text>
<text x="96.2" y="619.9" font-size="12" textLength="29.3" lengthAdjust="spacingAndGlyphs">Haber</text>
<text x="96.2" y="649.0" font-size="12.5" font-weight="bold" textLength="77.3" lengthAdjust="spacingAndGlyphs">Saldo Deudor</text>
<text x="262.3" y="596.0" font-size="12" textLength="48.6" lengthAdjust="spacingAndGlyphs">22.818,33</text>
<text x="289.5" y="618.8" font-size="12" textLength="21.4" lengthAdjust="spacingAndGlyphs">0,00</text>
<text x="253.4" y="648.0" font-size="12.5" font-weight="bold" textLength="57.5" lengthAdjust="spacingAndGlyphs">22.818,33</text>
<text x="527.4" y="565.8" font-size="12" font-weight="bold" textLength="43.2" lengthAdjust="spacingAndGlyphs">Asiento</text>
<text x="542.6" y="597.0" font-size="12" textLength="27.5" lengthAdjust="spacingAndGlyphs">Debe</text>
<text x="542.6" y="619.9" font-size="12" textLength="29.9" lengthAdjust="spacingAndGlyphs">Haber</text>
<text x="542.6" y="649.0" font-size="12.5" font-weight="bold" fill="#0a7d0a" textLength="63.2" lengthAdjust="spacingAndGlyphs">Saldo Nulo</text>
<text x="696.3" y="596.0" font-size="12" textLength="42.6" lengthAdjust="spacingAndGlyphs">6.719,55</text>
<text x="696.3" y="618.8" font-size="12" textLength="42.6" lengthAdjust="spacingAndGlyphs">6.719,55</text>
<text x="713.1" y="648.0" font-size="12.5" font-weight="bold" fill="#0a7d0a" textLength="25.8" lengthAdjust="spacingAndGlyphs">0,00</text>
</svg>
<!--/TXT-->
<!-- frame on top -->
<div class="abs" id="bt"></div><div class="abs" id="bl"></div><div class="abs" id="br"></div><div class="abs" id="bb"></div>
</div>
</body>
</html>
